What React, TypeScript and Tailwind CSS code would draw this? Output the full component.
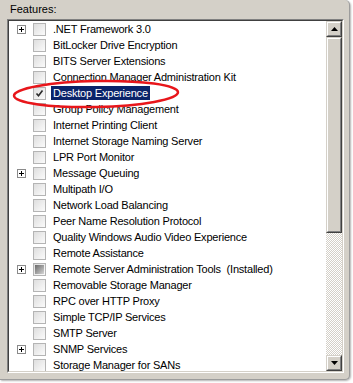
import React from "react";

type Item = { t: string; e?: boolean; c?: boolean; s?: boolean; i?: boolean };

const items: Item[] = [
  { t: ".NET Framework 3.0", e: true },
  { t: "BitLocker Drive Encryption" },
  { t: "BITS Server Extensions" },
  { t: "Connection Manager Administration Kit" },
  { t: "Desktop Experience", c: true, s: true },
  { t: "Group Policy Management" },
  { t: "Internet Printing Client" },
  { t: "Internet Storage Naming Server" },
  { t: "LPR Port Monitor" },
  { t: "Message Queuing", e: true },
  { t: "Multipath I/O" },
  { t: "Network Load Balancing" },
  { t: "Peer Name Resolution Protocol" },
  { t: "Quality Windows Audio Video Experience" },
  { t: "Remote Assistance" },
  { t: "Remote Server Administration Tools  (Installed)", e: true, i: true },
  { t: "Removable Storage Manager" },
  { t: "RPC over HTTP Proxy" },
  { t: "Simple TCP/IP Services" },
  { t: "SMTP Server" },
  { t: "SNMP Services", e: true },
  { t: "Storage Manager for SANs" },
];

function Raised({ className, children }: { className: string; children?: React.ReactNode }) {
  return (
    <div
      className={`border border-t-[#d4d0c8] border-l-[#d4d0c8] border-r-[#404040] border-b-[#404040] ${className}`}
    >
      <div className="w-full h-full border border-t-white border-l-white border-r-[#808080] border-b-[#808080] bg-[#d4d0c8] flex items-center justify-center">
        {children}
      </div>
    </div>
  );
}

function Expander() {
  return (
    <svg width="9" height="9" viewBox="0 0 9 9" className="block">
      <rect x="0.5" y="0.5" width="8" height="8" fill="#fff" stroke="#8a8a8a" />
      <path d="M2 4.5h5M4.5 2v5" stroke="#000" strokeWidth="1" />
    </svg>
  );
}

function Checkbox({ checked, indet }: { checked?: boolean; indet?: boolean }) {
  return (
    <div className="w-[13px] h-[13px] border border-[#b4b4b4] bg-gradient-to-br from-[#dedede] to-[#fbfbfb] relative flex items-center justify-center">
      {indet && <div className="w-[9px] h-[9px] bg-gradient-to-br from-[#6a6a6a] to-[#d6d6d6]" />}
      {checked && (
        <svg width="11" height="11" viewBox="0 0 11 11" className="absolute left-0 top-0">
          <polyline points="2.5,5.5 4.5,7.8 8.5,2.5" fill="none" stroke="#2a2a2a" strokeWidth="1.6" />
        </svg>
      )}
    </div>
  );
}

export default function App() {
  return (
    <div className="w-[353px] h-[383px] bg-white overflow-hidden font-['Liberation_Sans',Arial,sans-serif] text-[11px] text-black">
      <div className="relative w-[350px] h-[380px] bg-[#d4d0c8] rounded-tr-[5px] rounded-br-[5px] border-r border-b border-[#9c9c9c] shadow-[1px_1px_2px_rgba(0,0,0,0.3)]">
        <div className="h-[19px] pl-[10px] pt-[3px] leading-[13px]">Features:</div>
        <div className="relative ml-[7px] w-[337px] h-[354px] border border-t-[#808080] border-l-[#808080] border-r-white border-b-white">
          <div className="w-full h-full border border-t-[#404040] border-l-[#404040] border-r-[#d4d0c8] border-b-[#d4d0c8] bg-white flex overflow-hidden">
            <div className="flex-1 overflow-hidden tracking-[-0.2px]">
              {items.map((it) => (
                <div key={it.t} className="h-[16px] flex items-center pl-[8px]">
                  <div className="w-[9px] h-[9px]">{it.e && <Expander />}</div>
                  <div className="ml-[7px]">
                    <Checkbox checked={it.c} indet={it.i} />
                  </div>
                  <div
                    className={`ml-[5px] px-[2px] h-[14px] leading-[14px] whitespace-pre ${
                      it.s ? "bg-[#0a246a] text-white" : ""
                    }`}
                  >
                    {it.t}
                  </div>
                </div>
              ))}
            </div>
            <div className="w-[16px] flex flex-col">
              <Raised className="h-[16px] w-[16px]">
                <svg width="7" height="4" viewBox="0 0 7 4" className="block">
                  <path d="M3.5 0L7 4H0z" fill="#000" />
                </svg>
              </Raised>
              <Raised className="h-[196px] w-[16px]" />
              <div className="flex-1 bg-[repeating-conic-gradient(#ffffff_0_25%,#d4d0c8_0_50%)] bg-[length:2px_2px]" />
              <Raised className="h-[16px] w-[16px]">
                <svg width="7" height="4" viewBox="0 0 7 4" className="block">
                  <path d="M0 0H7L3.5 4z" fill="#000" />
                </svg>
              </Raised>
            </div>
          </div>
          <svg
            className="absolute left-[2px] top-[58px] pointer-events-none"
            width="172"
            height="34"
            viewBox="0 0 172 34"
          >
            <ellipse cx="86" cy="16" rx="82" ry="13" fill="none" stroke="#e8161b" strokeWidth="2.5" transform="rotate(-1.2 86 16)" />
          </svg>
        </div>
      </div>
    </div>
  );
}
